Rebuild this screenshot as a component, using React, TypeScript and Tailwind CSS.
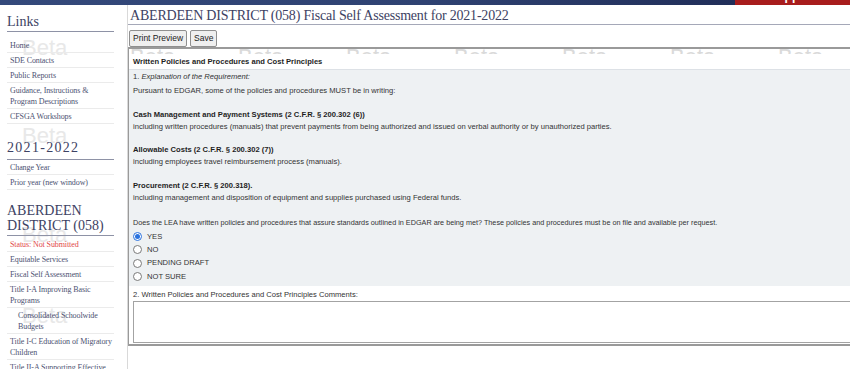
import React from "react";

const serif = "font-['Liberation_Serif','Times_New_Roman',serif]";

type NavItem = { label: string; indent?: boolean; red?: boolean };

const links: NavItem[] = [
  { label: "Home" },
  { label: "SDE Contacts" },
  { label: "Public Reports" },
  { label: "Guidance, Instructions & Program Descriptions" },
  { label: "CFSGA Workshops" },
];

const yearLinks: NavItem[] = [{ label: "Change Year" }, { label: "Prior year (new window)" }];

const districtLinks: NavItem[] = [
  { label: "Status: Not Submitted", red: true },
  { label: "Equitable Services" },
  { label: "Fiscal Self Assessment" },
  { label: "Title I-A Improving Basic Programs" },
  { label: "Consolidated Schoolwide Budgets", indent: true },
  { label: "Title I-C Education of Migratory Children" },
  { label: "Title II-A Supporting Effective" },
];

const radioOptions = ["YES", "NO", "PENDING DRAFT", "NOT SURE"];

function NavList({ items, className = "" }: { items: NavItem[]; className?: string }) {
  return (
    <ul className={className}>
      {items.map((item) => (
        <li
          key={item.label}
          className={`-mr-[3px] border-b border-[#ebebeb] pt-[2px] pb-[1px] text-[8px] leading-[11px] tracking-[-0.1px] ${
            item.indent ? "pl-[11px] pr-[11px]" : "pl-[3px]"
          } ${item.red ? "text-[#e14848]" : "text-[#4d5272]"}`}
        >
          {item.label}
        </li>
      ))}
    </ul>
  );
}

function Watermark({ top }: { top: string }) {
  return (
    <span
      className={`pointer-events-none absolute left-[22px] ${top} font-['Liberation_Sans',Arial,sans-serif] text-[22px] leading-none text-[#e8e8e8]`}
    >
      Beta
    </span>
  );
}

function Radio({ checked }: { checked?: boolean }) {
  if (checked) {
    return (
      <span className="flex h-[9px] w-[9px] items-center justify-center rounded-full border border-[#2a72de] bg-white">
        <span className="h-[5px] w-[5px] rounded-full bg-[#2a72de]" />
      </span>
    );
  }
  return <span className="h-[9px] w-[9px] rounded-full border border-[#7a7a7a] bg-white" />;
}

export default function App() {
  return (
    <div className="h-[369px] w-[850px] overflow-hidden bg-white font-['Liberation_Sans',Arial,sans-serif]">
      {/* Top banner */}
      <div className="flex h-[5px] overflow-hidden bg-gradient-to-r from-[#34497b] via-[#2f4272] to-[#1c2750]">
        <div className="flex-1" />
        <div className="w-[115px] overflow-hidden bg-[#a81d1d] pl-[6px]">
          <span className="-mt-[10px] block whitespace-nowrap text-[12px] font-bold leading-[13px] text-white">
            Grant Application - Beta
          </span>
        </div>
      </div>

      <div className="flex">
        {/* Sidebar */}
        <aside className={`relative h-[364px] w-[128px] shrink-0 border-r border-[#d9d9d9] pl-[7px] pr-[13px] ${serif}`}>
          <Watermark top="top-[32px]" />
          <Watermark top="top-[120px]" />
          <Watermark top="top-[219px]" />
          <Watermark top="top-[300px]" />

          <div className="relative">
            <h2 className="mt-[9px] border-b border-[#8e92a6] pb-[1px] text-[14px] leading-[16px] text-[#3d4263]">
              Links
            </h2>
            <NavList items={links} className="mt-[6px] mr-[3px]" />

            <h2 className="mt-[16px] border-b border-[#8e92a6] pb-[3px] text-[14px] leading-[16px] tracking-[1.3px] text-[#3d4263]">
              2021-2022
            </h2>
            <NavList items={yearLinks} className="mr-[3px]" />

            <h2 className="mt-[13px] border-b border-[#8e92a6] pb-[2px] text-[14px] leading-[15px] text-[#3d4263]">
              ABERDEEN DISTRICT (058)
            </h2>
            <NavList items={districtLinks} className="mt-[1px] mr-[3px]" />
          </div>
        </aside>

        {/* Main content */}
        <main className="min-w-0 flex-1 overflow-hidden">
          <h1
            className={`mt-[3px] whitespace-nowrap border-b border-[#a5a8b8] pl-[2px] text-[14px] leading-[16px] tracking-[-0.2px] text-[#3d4263] ${serif}`}
          >
            ABERDEEN DISTRICT (058) Fiscal Self Assessment for 2021-2022
          </h1>

          <div className="mt-[5px] flex gap-[3px] pl-px">
            <button className="h-[17px] rounded-[2px] border border-[#8f8f8f] bg-[#efefef] px-[3px] text-[8.5px] text-[#222]">
              Print Preview
            </button>
            <button className="h-[17px] rounded-[2px] border border-[#8f8f8f] bg-[#efefef] px-[3px] text-[8.5px] text-[#222]">
              Save
            </button>
          </div>

          <div className="w-[760px] border-x border-b-2 border-t-2 border-[#9a9a9a] text-[7.6px] text-[#333]">
            {/* watermark strip */}
            <div className="flex h-[5px] overflow-hidden pl-px">
              {Array.from({ length: 7 }).map((_, i) => (
                <span key={i} className="-mt-[3px] w-[108px] shrink-0 text-[22px] leading-none text-[#dadada]">
                  Beta
                </span>
              ))}
            </div>

            <div className="h-[16px] border-b border-[#dde1e6] pl-[4px] pt-[2px] font-bold leading-[12px] text-[#1e1e1e]">
              Written Policies and Procedures and Cost Principles
            </div>

            <div className="bg-[#eef1f3] pb-[3px] pl-[4px] pt-px leading-[12px]">
              <p>
                1. <i>Explanation of the Requirement:</i>
              </p>
              <p className="mt-[2px]">Pursuant to EDGAR, some of the policies and procedures MUST be in writing:</p>

              <p className="mt-[12px] font-bold text-[#1e1e1e]">Cash Management and Payment Systems (2 C.F.R. § 200.302 (6))</p>
              <p>including written procedures (manuals) that prevent payments from being authorized and issued on verbal authority or by unauthorized parties.</p>

              <p className="mt-[11px] font-bold text-[#1e1e1e]">Allowable Costs (2 C.F.R. § 200.302 (7))</p>
              <p>including employees travel reimbursement process (manuals).</p>

              <p className="mt-[12px] font-bold text-[#1e1e1e]">Procurement (2 C.F.R. § 200.318).</p>
              <p>including management and disposition of equipment and supplies purchased using Federal funds.</p>

              <p className="mt-[13px] text-[7.25px]">
                Does the LEA have written policies and procedures that assure standards outlined in EDGAR are being met? These policies and procedures must be on file and available per request.
              </p>

              <div className="mt-px">
                {radioOptions.map((opt, i) => (
                  <label key={opt} className="flex h-[13.3px] items-center gap-[5px]">
                    <Radio checked={i === 0} />
                    <span>{opt}</span>
                  </label>
                ))}
              </div>
            </div>

            <p className="mt-[3px] pl-[4px] leading-[12px]">2. Written Policies and Procedures and Cost Principles Comments:</p>
            <div className="pb-px pl-[4px]">
              <textarea className="block h-[42px] w-[740px] resize-none border border-[#a3a3a3] bg-white" />
            </div>
          </div>
        </main>
      </div>
    </div>
  );
}
